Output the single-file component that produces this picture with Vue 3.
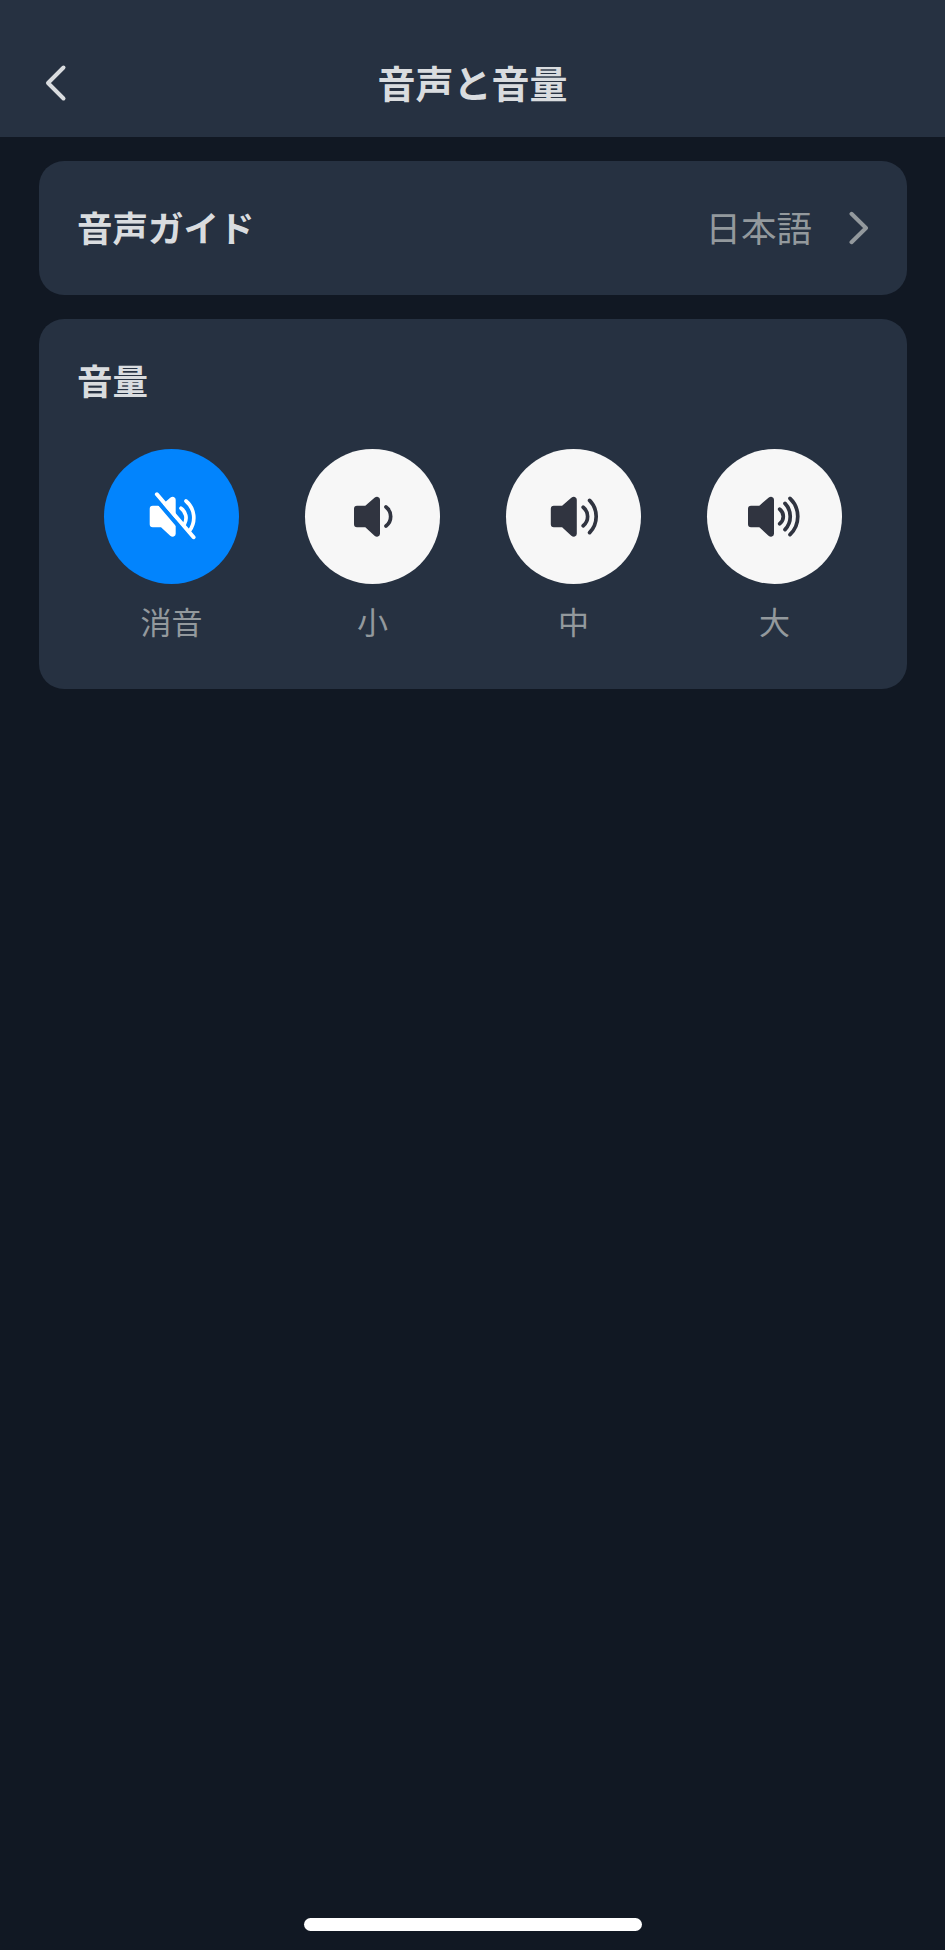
<template>
  <div class="page">
    <header class="nav-bar">
      <button class="back" aria-label="戻る">
        <svg width="24" height="38" viewBox="0 0 24 38">
          <path d="M20.5 3.5 L5 19 L20.5 34.5" />
        </svg>
      </button>
      <h1>音声と音量</h1>
    </header>

    <main class="content">
      <section class="card guide">
        <span class="label">音声ガイド</span>
        <span class="value">日本語</span>
        <svg class="arrow" width="20" height="34" viewBox="0 0 20 34">
          <path d="M2.5 2.8 L17 17 L2.5 31.2" />
        </svg>
      </section>

      <section class="card volume">
        <h2 class="label">音量</h2>
        <div class="levels">
          <div
            v-for="level in levels"
            :key="level.key"
            class="level"
            :class="{ active: level.key === current }"
            @click="current = level.key"
          >
            <svg class="circle" viewBox="0 0 135 135">
              <path class="speaker" :transform="`translate(${level.x} 0)`" :d="speaker" />
              <path v-for="wave in level.waves" :key="wave" class="wave" :d="wave" />
              <template v-if="level.key === 'mute'">
                <path class="slash-gap" d="M48.6 46.4 L87.2 91.6" />
                <path class="slash" d="M52.9 45.3 L89.6 88.2" />
              </template>
            </svg>
            <span class="name">{{ level.name }}</span>
          </div>
        </div>
      </section>
    </main>

    <div class="home-indicator"></div>
  </div>
</template>

<script setup>
import { ref } from 'vue'

const current = ref('mute')

const speaker =
  'M3 56.7 H11.3 L20.5 48.7 Q22.2 47.4 24 47.9 Q26 48.5 26 50.7 V84.7 Q26 86.9 24 87.5 Q22.2 88 20.5 86.7 L11.3 78.3 H3 Q0 78.3 0 75.3 V59.7 Q0 56.7 3 56.7 Z'

const levels = [
  {
    key: 'mute',
    name: '消音',
    x: 45.7,
    waves: ['M77 59.2 A12 12 0 0 1 80.4 75', 'M82 52 A22 22 0 0 1 85.4 82'],
  },
  {
    key: 'low',
    name: '小',
    x: 49,
    waves: ['M81 58 A12 12 0 0 1 81 77'],
  },
  {
    key: 'middle',
    name: '中',
    x: 44.8,
    waves: ['M77.2 58.2 A12 12 0 0 1 77.2 76.8', 'M83.6 51.4 A23 23 0 0 1 83.6 83.6'],
  },
  {
    key: 'high',
    name: '大',
    x: 41,
    waves: [
      'M72.7 60.2 A9.2 9.2 0 0 1 72.7 74.8',
      'M78 54.4 A19 19 0 0 1 78 80.6',
      'M83 49.4 A25 25 0 0 1 83 85.6',
    ],
  },
]
</script>

<style>
body {
  margin: 0;
  background: #111823;
}
</style>

<style scoped>
.page {
  display: flex;
  flex-direction: column;
  box-sizing: border-box;
  height: 1950px;
  background: #111823;
  color: #d9dcdf;
  font-family: 'Noto Sans CJK JP', sans-serif;
}

.nav-bar {
  display: grid;
  grid-template-columns: 100px 1fr 100px;
  align-items: center;
  box-sizing: border-box;
  height: 136.7px;
  padding-top: 30px;
  background: #263141;
}

.back {
  display: flex;
  margin: 0;
  padding: 0 0 0 43px;
  border: none;
  background: none;
  cursor: pointer;
}

.back path,
.arrow path {
  fill: none;
  stroke: #d9dcdf;
  stroke-width: 4;
  stroke-linecap: round;
  stroke-linejoin: round;
}

h1 {
  margin: 0;
  padding-bottom: 2px;
  text-align: center;
  font-size: 38px;
  line-height: 56px;
  font-weight: 700;
}

.content {
  display: flex;
  flex-direction: column;
  gap: 24px;
  flex: 1;
  padding: 24px 38px 24px 38.5px;
}

.card {
  box-sizing: border-box;
  border-radius: 25px;
  background: #263141;
}

.guide {
  display: flex;
  align-items: center;
  height: 134.8px;
  padding: 0 38px 0 38.5px;
}

.label {
  margin: 0;
  font-size: 35.5px;
  line-height: 50px;
  font-weight: 700;
}

.guide .label,
.value {
  padding-bottom: 2px;
}

.value {
  margin-left: auto;
  margin-right: 37px;
  color: #93999d;
  font-size: 35.5px;
  line-height: 50px;
}

.arrow path {
  stroke: #93999d;
}

.volume {
  height: 370px;
  padding: 36px 32px 0 32.5px;
}

.volume .label {
  padding-left: 6px;
}

.levels {
  display: grid;
  grid-template-columns: repeat(4, 1fr);
  margin-top: 43.3px;
}

.level {
  display: flex;
  flex-direction: column;
  align-items: center;
  cursor: pointer;
}

.circle {
  width: 135px;
  height: 135px;
  border-radius: 50%;
  background: #f7f7f7;
}

.speaker {
  fill: #303440;
}

.wave {
  fill: none;
  stroke: #303440;
  stroke-width: 3.7;
  stroke-linecap: round;
}

.active .circle {
  background: #0284fd;
}

.active .speaker {
  fill: #fff;
}

.active .wave {
  stroke: #fff;
}

.slash,
.slash-gap {
  fill: none;
  stroke: #fff;
  stroke-width: 4;
  stroke-linecap: round;
}

.slash-gap {
  stroke: #0284fd;
  stroke-width: 4.4;
}

.name {
  margin-top: 15.5px;
  color: #93999d;
  font-size: 31px;
  line-height: 44px;
}

.home-indicator {
  align-self: center;
  width: 338px;
  height: 12.7px;
  margin-bottom: 19px;
  border-radius: 7px;
  background: #fff;
}
</style>
